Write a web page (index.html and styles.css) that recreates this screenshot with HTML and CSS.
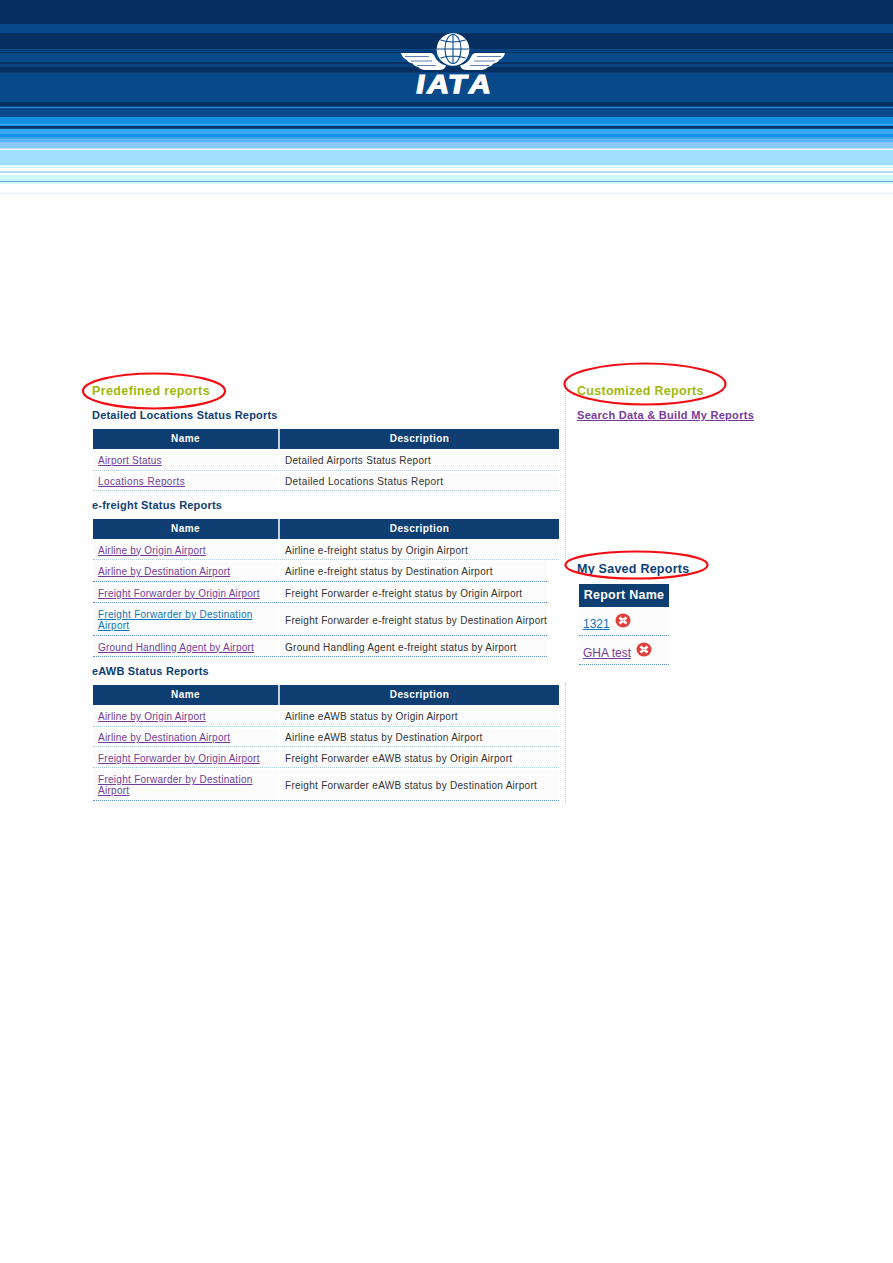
FILE: index.html
```html
<!DOCTYPE html>
<html lang="en">
<head>
<meta charset="utf-8">
<title>IATA Reports</title>
<link rel="stylesheet" href="styles.css">
</head>
<body>
<header class="banner">
  <svg class="logo" width="106" height="64" viewBox="0 0 106 64" role="img" aria-label="IATA">
    <circle cx="53" cy="16.500" r="16.300" fill="#fff"/>
    <g fill="none" stroke="#0a4a8a" stroke-width="1.100">
      <ellipse cx="53" cy="16" rx="8" ry="14.500"/>
      <path d="M53 1V31M37 16H69M40.500 7Q53 11 65.500 7M40.500 25Q53 21 65.500 25"/>
    </g>
    <g id="wing">
      <path fill="#fff" d="M1 20H30Q33.500 20 35 24Q38 30.500 46 32.500Q45 37 39 37H24Q20 36.500 18 34Q14 33 12.500 30.500Q8 29.500 7 27Q2 25 1 20Z"/>
      <path d="M5 23.500H29M11 28H32M17 32.500H36" stroke="#5f80b0" stroke-width="1" fill="none"/>
    </g>
    <use href="#wing" transform="translate(106 0) scale(-1 1)"/>
    <text class="logo-text" transform="translate(0 59.500) skewX(-10) scale(1.160 1)" x="13 22.500 40.500 58.500" y="0">IATA</text>
  </svg>
</header>
<main class="content">
  <section class="predefined">
    <h1 class="title title-left">Predefined reports<svg class="ring ring-a" width="148" height="42"><ellipse cx="74" cy="21" rx="71" ry="17.500"/></svg></h1>
    <h2 class="sub sub-a"><span>Detailed Locations Status Reports</span></h2>
    <div class="table">
      <div class="row head"><div>Name</div><div>Description</div></div>
      <div class="row h22"><div><a>Airport Status</a></div><div>Detailed Airports Status Report</div></div>
      <div class="row h20"><div><a class="wide">Locations Reports</a></div><div class="wide">Detailed Locations Status Report</div></div>
    </div>
    <h2 class="sub sub-b"><span>e-freight Status Reports</span></h2>
    <div class="table">
      <div class="row head"><div>Name</div><div>Description</div></div>
      <div class="row h21"><div><a>Airline by Origin Airport</a></div><div>Airline e-freight status by Origin Airport</div></div>
      <div class="row h22 narrow"><div><a>Airline by Destination Airport</a></div><div>Airline e-freight status by Destination Airport</div></div>
      <div class="row h21 narrow"><div><a>Freight Forwarder by Origin Airport</a></div><div>Freight Forwarder e-freight status by Origin Airport</div></div>
      <div class="row h33 narrow"><div><a class="fresh two-line">Freight Forwarder by Destination<br>Airport</a></div><div>Freight Forwarder e-freight status by Destination Airport</div></div>
      <div class="row h21 narrow"><div><a>Ground Handling Agent by Airport</a></div><div>Ground Handling Agent e-freight status by Airport</div></div>
    </div>
    <h2 class="sub sub-c"><span>eAWB Status Reports</span></h2>
    <div class="table">
      <div class="row head"><div>Name</div><div>Description</div></div>
      <div class="row h22 pale"><div><a>Airline by Origin Airport</a></div><div>Airline eAWB status by Origin Airport</div></div>
      <div class="row h20 pale"><div><a>Airline by Destination Airport</a></div><div>Airline eAWB status by Destination Airport</div></div>
      <div class="row h21 pale"><div><a>Freight Forwarder by Origin Airport</a></div><div>Freight Forwarder eAWB status by Origin Airport</div></div>
      <div class="row h33 strong"><div><a class="two-line">Freight Forwarder by Destination<br>Airport</a></div><div>Freight Forwarder eAWB status by Destination Airport</div></div>
    </div>
  </section>
  <div class="divider"><i class="line-top"></i><i class="line-bottom"></i></div>
  <aside class="side">
    <h1 class="title title-right">Customized Reports<svg class="ring ring-b" width="166" height="46"><ellipse cx="83" cy="23" rx="80.500" ry="20.500"/></svg></h1>
    <p class="build"><a>Search Data &amp; Build My Reports</a></p>
    <h2 class="saved">My Saved Reports<svg class="ring ring-c" width="148" height="32"><ellipse cx="73.500" cy="16" rx="71" ry="13.500"/></svg></h2>
    <div class="saved-table">
      <div class="saved-head">Report Name</div>
      <div class="saved-row"><a class="fresh">1321</a>
        <svg class="del" width="16" height="15" viewBox="0 0 16 15"><ellipse cx="8" cy="7.500" rx="7.500" ry="7" fill="#e2403c"/><path d="M4.500 4.500L11.500 10.500M11.500 4.500L4.500 10.500" stroke="#fff" stroke-width="2.800"/><path d="M6.500 7.500H9.500" stroke="#f0a09e" stroke-width="1"/></svg></div>
      <div class="saved-row"><a>GHA test</a>
        <svg class="del" width="16" height="15" viewBox="0 0 16 15"><ellipse cx="8" cy="7.500" rx="7.500" ry="7" fill="#e2403c"/><path d="M4.500 4.500L11.500 10.500M11.500 4.500L4.500 10.500" stroke="#fff" stroke-width="2.800"/><path d="M6.500 7.500H9.500" stroke="#f0a09e" stroke-width="1"/></svg></div>
    </div>
  </aside>
</main>
</body>
</html>
```
FILE: styles.css
```css
* { box-sizing: border-box; }
body { margin: 0; background: #fff; height: 1263px; overflow: hidden; font-family: "Liberation Sans", Arial, sans-serif; color: #333; }
h1, h2, p { margin: 0; }
.banner {
  height: 194px; padding: 33px 0 0 400px;
  background: linear-gradient(#072f60 0 24px, #08498a 24px 33px, #072f60 33px 49px, #08498a 49px 50px, #073a72 50px 51px, #08498a 51px 52px, #072f60 52px 53px, #08498a 53px 62px, #072f60 62px 64px, #08427e 64px 67px, #072f60 67px 72px, #083d78 72px 73px, #08498a 73px 102px, #072f60 102px 106px, #08498a 106px 107px, #2589d6 107px 108px, #08498a 108px 117px, #1690e0 117px 124px, #45adf0 124px 125px, #1690e0 125px 126px, #06366e 126px 128px, #08498a 128px 129px, #35a9f0 129px 134px, #1690e0 134px 137px, #35a9f0 137px 139px, #70bdf5 139px 140px, #59b2f2 140px 142px, #8ac8fc 142px 148px, #b8dcfb 148px 149px, #fff 149px 150px, #a0deff 150px 165px, #d9f2ff 165px 166px, #fff 166px 167px, #c8f2fd 167px 168px, #fff 168px 171px, #b3ddf3 171px 173px, #fff 173px 175px, #ccf8fc 175px 181px, #68a5cf 181px 182px, #d8fcfc 182px 184px, #fff 184px 193px, #d8f6f7 193px 194px);
}
.logo { display: block; overflow: visible; }
.logo-text { font: bold 26px "Liberation Sans", Arial, sans-serif; fill: #fff; stroke: #fff; stroke-width: 1.3; }
.content { display: flex; padding: 190px 0 0 92px; }
.predefined { width: 467px; }
.title { position: relative; height: 16px; font-size: 12.5px; line-height: 14px; color: #a0b90c; white-space: nowrap; }
.title-left { letter-spacing: .38px; }
.title-right { letter-spacing: .29px; }
.ring { position: absolute; overflow: visible; }
.ring ellipse { fill: none; stroke: #f20d14; stroke-width: 2.2; }
.ring-a { left: -12px; top: -14px; }
.ring-b { left: -15px; top: -23px; }
.ring-c { left: -14px; top: -13px; }
.sub { font-size: 11px; line-height: 14px; color: #0f3e72; white-space: nowrap; letter-spacing: .2px; }
.sub-a { height: 29px; padding-top: 8px; }
.sub-b { height: 28px; padding-top: 7px; }
.sub-c { height: 28px; padding-top: 7px; }
.table { margin-left: 1px; }
.row { display: grid; grid-template-columns: 185px 279px; column-gap: 2px; font-size: 10px; letter-spacing: .28px; white-space: nowrap; line-height: 11px; border-bottom: 1px dotted #b4cbe4; }
.row > div { display: flex; align-items: center; padding-left: 5px; background: #fcfcfc; border-top: 2px solid #fff; }
.row.head { height: 20px; border: 0; font-weight: bold; letter-spacing: .4px; color: #fff; background: #c3cfdd; }
.row.head > div { justify-content: center; padding: 0 0 1px; border: 0; background: #0f3e72; }
.row a { letter-spacing: .22px; }
.row .wide { letter-spacing: .38px; }
.row .two-line { letter-spacing: .28px; }
.h20 { height: 20px; }
.h21 { height: 21px; }
.h22 { height: 22px; }
.h33 { height: 33px; }
.narrow { width: 454px; grid-template-columns: 185px 267px; border-bottom-color: #5b8fc8; }
.strong { border-bottom-color: #5b8fc8; }
.pale { border-bottom-color: #a9cbea; }
a { color: #743c99; text-decoration: underline; text-underline-offset: 1px; text-decoration-thickness: 1px; }
a.fresh { color: #0d75b8; }
.divider { width: 1px; margin: -6px 11px 0 6px; display: flex; flex-direction: column; justify-content: space-between; height: 425px; }
.line-top { height: 182px; border-left: 1px dotted #b4cbe4; }
.line-bottom { height: 120px; border-left: 1px dotted #b4cbe4; }
.side { width: 200px; }
.build { padding-top: 8px; height: 162px; font-size: 11px; font-weight: bold; line-height: 14px; letter-spacing: .3px; white-space: nowrap; }
.saved { position: relative; height: 22px; font-size: 12.5px; font-weight: bold; line-height: 14px; letter-spacing: .25px; color: #0b4177; white-space: nowrap; }
.saved-table { width: 90px; margin-left: 2px; font-size: 12px; }
.saved-head { height: 23px; line-height: 23px; text-align: center; color: #fff; background: #0f3e72; font-size: 12.5px; font-weight: bold; letter-spacing: .25px; white-space: nowrap; }
.saved-row { display: flex; gap: 5px; height: 29px; padding: 6px 0 0 4px; background: #fcfcfc; border-bottom: 1px dotted #5b8fc8; white-space: nowrap; }
.saved-row a { padding-top: 4px; line-height: 14px; }
```
